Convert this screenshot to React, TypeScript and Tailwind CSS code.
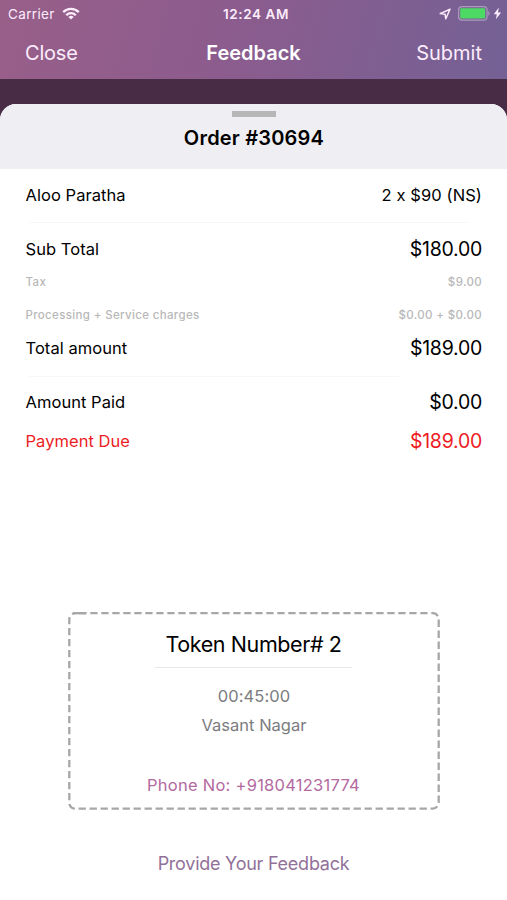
import clsx from "clsx";

const order = {
  id: "30694",
  token: 2,
  time: "00:45:00",
  location: "Vasant Nagar",
  phone: "+918041231774",
};

const StatusBar = () => (
  <div className="grid h-[27px] grid-cols-3 items-center pl-[8px] pr-[5px] text-[13.5px]">
    <div className="flex items-center gap-[7px]">
      <span className="pt-px tracking-[0.35px]">Carrier</span>
      <svg width="18" height="13" viewBox="0 0 18 13" fill="none" stroke="currentColor" strokeWidth="2.3">
        <path d="M1.2 5.1a11 11 0 0 1 15.6 0" />
        <path d="M4.2 8.2a6.8 6.8 0 0 1 9.6 0" />
        <path d="M9 12.6 6.4 10a3.7 3.7 0 0 1 5.2 0z" fill="currentColor" stroke="none" />
      </svg>
    </div>
    <span className="pl-[2px] pt-px text-center font-semibold tracking-[0.6px]">12:24 AM</span>
    <div className="flex items-center justify-end">
      <svg width="13" height="12" viewBox="0 0 13 12" fill="none" stroke="currentColor" strokeWidth="1.5" strokeLinejoin="round">
        <path d="M11 1.2 1.2 5.6l4.9.7.7 4.5z" />
      </svg>
      <svg className="ml-[6px]" width="33" height="15" viewBox="0 0 33 15">
        <rect x="0.6" y="0.6" width="28.4" height="13.6" rx="3.4" fill="none" stroke="#fff" strokeOpacity="0.38" strokeWidth="1.2" />
        <rect x="2.2" y="2.2" width="25" height="10.4" rx="1.4" fill="#4cd964" />
        <path d="M30.3 5v4.8c1.6-.5 1.6-4.3 0-4.8z" fill="#fff" fillOpacity="0.38" />
      </svg>
      <svg className="ml-[2px]" width="9" height="13" viewBox="0 0 9 13" fill="currentColor">
        <path d="M5.8.6.8 7.2h3L2.9 12.2l5.2-6.7H5z" />
      </svg>
    </div>
  </div>
);

type RowProps = {
  label: string;
  value: string;
  className?: string;
  valueClass?: string;
  muted?: boolean;
};

const Row = ({ label, value, className, valueClass = "text-[19.5px] tracking-[-0.25px]", muted }: RowProps) => (
  <div
    className={clsx(
      "flex items-center justify-between",
      muted ? "text-[11.5px] font-medium tracking-[0.35px] text-[#b8b8b8]" : "text-[16.5px] tracking-[0.05px]",
      className
    )}
  >
    <span>{label}</span>
    <span className={muted ? "" : valueClass}>{value}</span>
  </div>
);

export default function App() {
  return (
    <div className="flex h-[900px] w-[507px] flex-col overflow-hidden bg-[#482b44] font-['Inter',sans-serif] text-black">
      {/* Header */}
      <header className="h-[79px] shrink-0 bg-[linear-gradient(105deg,#985f89_0%,#8b5c8e_48%,#746195_100%)] text-[#fcecfc]">
        <StatusBar />
        <nav className="grid h-[51px] grid-cols-3 items-center px-[25px] text-[20px]">
          <button className="text-left tracking-[-0.2px]">Close</button>
          <h1 className="text-center font-semibold text-white">Feedback</h1>
          <button className="text-right">Submit</button>
        </nav>
      </header>

      {/* Order sheet */}
      <main className="mt-[25px] flex grow flex-col overflow-hidden rounded-t-[16px] bg-white">
        <div className="flex h-[65px] shrink-0 flex-col items-center bg-[#efeef3] pt-[7px]">
          <div className="ml-px h-[6px] w-[44px] bg-[#b6b6b7]" />
          <h2 className="mt-[7px] ml-px text-[20px] leading-[28px] font-semibold tracking-[0.2px]">Order #{order.id}</h2>
        </div>

        <section className="pr-[25px] pl-[25.5px]">
          <Row label="Aloo Paratha" value="2 x $90 (NS)" className="h-[53px]" valueClass="text-[16.5px] tracking-[0.1px]" />
          <div className="ml-[3px] h-px w-[440px] bg-[#f7f7f7]" />
          <Row label="Sub Total" value="$180.00" className="h-[53px]" />
          <Row label="Tax" value="$9.00" muted className="h-[14px]" />
          <Row label="Processing + Service charges" value="$0.00 + $0.00" muted className="mt-[19px] h-[14px]" />
          <Row label="Total amount" value="$189.00" className="h-[51px]" />
          <div className="mt-[2px] ml-[3px] h-px w-[370px] bg-[#f7f7f7]" />
          <Row label="Amount Paid" value="$0.00" className="h-[51px]" />
          <Row label="Payment Due" value="$189.00" className="h-[27px] text-[#ed1c24]" />
        </section>

        {/* Token card */}
        <section className="relative mx-auto mt-[157px] flex h-[198px] w-[372px] shrink-0 flex-col items-center">
          <svg className="absolute inset-0" width="372" height="198" fill="none">
            <rect x="1.3" y="1.2" width="369.4" height="195.4" rx="6" stroke="#a7a7a9" strokeWidth="2.3" strokeDasharray="7.3 3.7" strokeDashoffset="7" />
            <path d="M5 1.2h13" stroke="#a7a7a9" strokeWidth="2.3" />
          </svg>
          <h3 className="mt-[17px] text-[21.5px] leading-[30px] tracking-[-0.4px]">Token Number# {order.token}</h3>
          <div className="mt-[8px] h-px w-[197px] bg-[#e8e8e9]" />
          <p className="mt-[16px] ml-px text-[16.5px] leading-[24px] tracking-[0.1px] text-[#7b7c80]">{order.time}</p>
          <p className="mt-[5px] ml-px text-[16.5px] leading-[24px] text-[#7b7c80]">{order.location}</p>
          <p className="mt-[36px] text-[16.5px] leading-[24px] tracking-[0.25px] text-[#b36a9f]">Phone No: {order.phone}</p>
        </section>

        <button className="mx-auto mt-[42px] text-[18px] leading-[24px] tracking-[-0.25px] text-[#927199]">Provide Your Feedback</button>
      </main>
    </div>
  );
}
